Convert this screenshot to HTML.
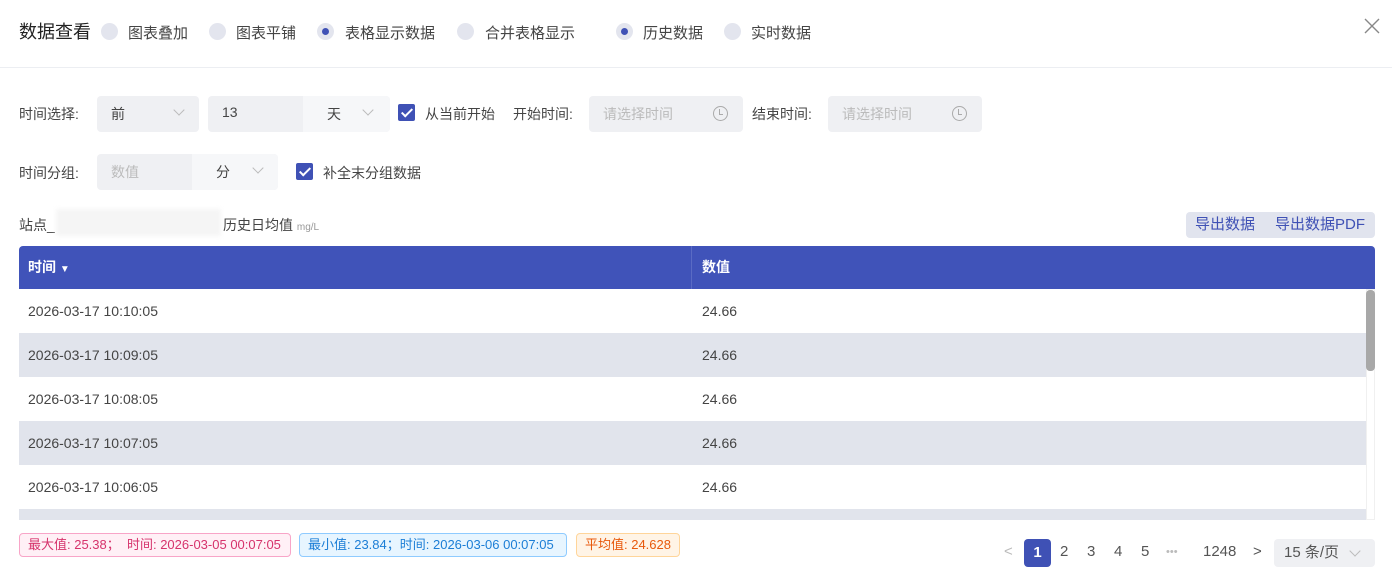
<!DOCTYPE html>
<html><head><meta charset="utf-8"><style>
*{box-sizing:border-box;margin:0;padding:0}
body{width:1392px;height:569px;overflow:hidden;background:#fff;font-family:"Liberation Sans","Noto Sans CJK SC",sans-serif;font-size:14px;color:#333;position:relative}
.abs{position:absolute}
.radio{position:absolute;top:23px;width:17px;height:17px;border-radius:50%;background:#e3e5ee}
.radio.on::after{content:"";position:absolute;left:5px;top:5px;width:7px;height:7px;border-radius:50%;background:#3f51b5}
.rl{position:absolute;top:22px;font-size:15px;color:#444}
.box{position:absolute;background:#eff0f3;border-radius:4px;color:#999}
.lbl{position:absolute;color:#444}
.chev{position:absolute;width:8px;height:8px;border-right:1px solid #bbb;border-bottom:1px solid #bbb;transform:rotate(45deg)}
.cb{position:absolute;width:17px;height:17px;background:#3f51b5;border-radius:2px}
.cb::after{content:"";position:absolute;left:6px;top:2px;width:4px;height:9px;border-right:2px solid #fff;border-bottom:2px solid #fff;transform:rotate(45deg)}
.clock{position:absolute;width:15px;height:15px;border:1.3px solid #aaa;border-radius:50%}
.clock::after{content:"";position:absolute;left:5px;top:2px;width:3px;height:5px;border-left:1.3px solid #aaa;border-bottom:1.3px solid #aaa}
.row{position:absolute;left:19px;width:1347px;height:44px;line-height:44px;color:#444}
.row span{position:absolute}
.tag{position:absolute;top:533px;height:24px;line-height:22px;border-radius:4px;font-size:13px;padding:0 8px;border:1px solid}
.pg{position:absolute;top:543px;color:#555;font-size:15px}
</style></head><body>
<div class="abs" style="left:19px;top:18px;font-size:18px;color:#222">数据查看</div>
<div class="radio" style="left:101px"></div><div class="rl" style="left:128px">图表叠加</div>
<div class="radio" style="left:209px"></div><div class="rl" style="left:236px">图表平铺</div>
<div class="radio on" style="left:317px"></div><div class="rl" style="left:345px">表格显示数据</div>
<div class="radio" style="left:457px"></div><div class="rl" style="left:485px">合并表格显示</div>
<div class="radio on" style="left:616px"></div><div class="rl" style="left:643px">历史数据</div>
<div class="radio" style="left:724px"></div><div class="rl" style="left:751px">实时数据</div>
<svg class="abs" style="left:1364px;top:18px" width="16" height="16"><path d="M1 1L15 15M15 1L1 15" stroke="#888" stroke-width="1.4"/></svg>
<div class="abs" style="left:0;top:67px;width:1392px;height:1px;background:#eceef2"></div>

<div class="lbl" style="left:19px;top:104px">时间选择:</div>
<div class="box" style="left:97px;top:96px;width:102px;height:36px"><span class="abs" style="left:14px;top:8px;color:#444">前</span></div><div class="chev" style="left:175px;top:106px"></div>
<div class="box" style="left:208px;top:96px;width:182px;height:36px"><span class="abs" style="left:14px;top:8px;color:#444">13</span><div class="abs" style="left:95px;top:0;width:87px;height:36px;background:#f6f7f9;border-radius:0 4px 4px 0"></div><span class="abs" style="left:119px;top:8px;color:#444">天</span></div><div class="chev" style="left:364px;top:106px"></div>
<div class="cb" style="left:398px;top:104px"></div>
<div class="lbl" style="left:425px;top:104px">从当前开始</div>
<div class="lbl" style="left:513px;top:104px">开始时间:</div>
<div class="box" style="left:589px;top:96px;width:154px;height:36px"><span class="abs" style="left:14px;top:8px;color:#bbb">请选择时间</span></div><div class="clock" style="left:713px;top:106px"></div>
<div class="lbl" style="left:752px;top:104px">结束时间:</div>
<div class="box" style="left:828px;top:96px;width:154px;height:36px"><span class="abs" style="left:14px;top:8px;color:#bbb">请选择时间</span></div><div class="clock" style="left:952px;top:106px"></div>

<div class="lbl" style="left:19px;top:163px">时间分组:</div>
<div class="box" style="left:97px;top:154px;width:181px;height:36px"><span class="abs" style="left:14px;top:8px;color:#bbb">数值</span><div class="abs" style="left:95px;top:0;width:86px;height:36px;background:#f6f7f9;border-radius:0 4px 4px 0"></div><span class="abs" style="left:119px;top:8px;color:#444">分</span></div><div class="chev" style="left:254px;top:164px"></div>
<div class="cb" style="left:296px;top:163px"></div>
<div class="lbl" style="left:323px;top:163px">补全末分组数据</div>

<div class="lbl" style="left:19px;top:215px">站点_</div>
<div class="abs" style="left:56px;top:209px;width:165px;height:27px;background:#f5f5f5;filter:blur(2px)"></div>
<div class="lbl" style="left:223px;top:215px">历史日均值 <span style="font-size:10px;color:#999">mg/L</span></div>
<div class="abs" style="left:1186px;top:212px;width:189px;height:26px;background:#e1e4ee;border-radius:4px;color:#3f51b5;line-height:26px;font-size:15px"><span class="abs" style="left:9px">导出数据</span><span class="abs" style="left:89px">导出数据PDF</span></div>

<div class="abs" style="left:19px;top:246px;width:1356px;height:43px;background:#4053b9;border-radius:4px 4px 0 0;color:#fff;font-weight:bold;line-height:43px">
<span class="abs" style="left:9px">时间 <span style="font-size:10px">▼</span></span><span class="abs" style="left:683px">数值</span>
<div class="abs" style="left:672px;top:0;width:1px;height:43px;background:#5a6bc4"></div></div>
<div class="row" style="top:289px;background:#fff"><span style="left:9px">2026-03-17 10:10:05</span><span style="left:683px">24.66</span></div>
<div class="row" style="top:333px;background:#e1e4ec"><span style="left:9px">2026-03-17 10:09:05</span><span style="left:683px">24.66</span></div>
<div class="row" style="top:377px;background:#fff"><span style="left:9px">2026-03-17 10:08:05</span><span style="left:683px">24.66</span></div>
<div class="row" style="top:421px;background:#e1e4ec"><span style="left:9px">2026-03-17 10:07:05</span><span style="left:683px">24.66</span></div>
<div class="row" style="top:465px;background:#fff"><span style="left:9px">2026-03-17 10:06:05</span><span style="left:683px">24.66</span></div>
<div class="row" style="top:509px;height:11px;background:#e1e4ec"></div>
<div class="abs" style="left:1366px;top:289px;width:9px;height:231px;background:#fff;border:1px solid #f0f0f0"></div>
<div class="abs" style="left:1366px;top:290px;width:9px;height:81px;background:#a8a8a8;border-radius:4px"></div>

<div class="tag" style="left:19px;width:272px;color:#d6336c;background:#fff0f6;border-color:#f8a5c8">最大值: 25.38；&nbsp; 时间: 2026-03-05 00:07:05</div>
<div class="tag" style="left:299px;width:268px;color:#1c7ed6;background:#e7f5ff;border-color:#8fcbff">最小值: 23.84；时间: 2026-03-06 00:07:05</div>
<div class="tag" style="left:576px;width:104px;color:#e8590c;background:#fff4e6;border-color:#ffd59a">平均值: 24.628</div>

<div class="pg" style="left:1004px;color:#bbb">&lt;</div>
<div class="abs" style="left:1024px;top:539px;width:27px;height:28px;background:#3f51b5;border-radius:4px;color:#fff;font-weight:bold;text-align:center;line-height:28px;font-size:15px">1</div>
<div class="pg" style="left:1060px">2</div><div class="pg" style="left:1087px">3</div><div class="pg" style="left:1114px">4</div><div class="pg" style="left:1141px">5</div>
<div class="pg" style="left:1166px;color:#bbb;font-size:11px;top:546px">•••</div>
<div class="pg" style="left:1203px">1248</div>
<div class="pg" style="left:1253px">&gt;</div>
<div class="abs" style="left:1274px;top:539px;width:101px;height:28px;background:#eff0f3;border-radius:4px;color:#555;line-height:28px;font-size:15px"><span class="abs" style="left:10px">15 条/页</span></div><div class="chev" style="left:1351px;top:547px"></div>
</body></html>
